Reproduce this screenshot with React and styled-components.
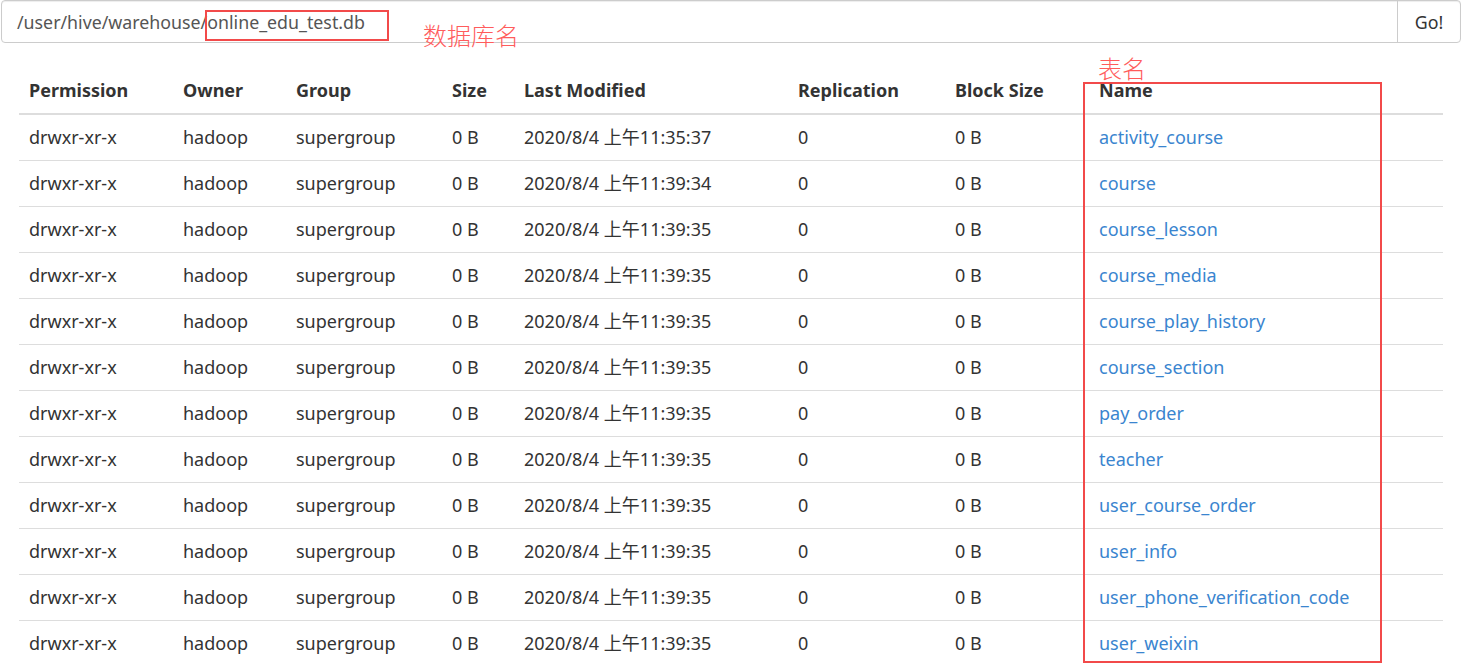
import React from 'react';
import styled, { createGlobalStyle } from 'styled-components';

const GlobalStyle = createGlobalStyle`
  html, body {
    margin: 0;
    padding: 0;
    background: #fff;
  }
  body {
    font-family: "Noto Sans", "Noto Sans CJK SC", sans-serif;
    font-size: 18px;
    color: #333;
  }
`;

const Page = styled.div`
  position: relative;
  width: 1462px;
  height: 664px;
  overflow: hidden;
`;

const InputGroup = styled.div`
  display: flex;
  height: 43px;
  margin: 0 1px;
  border: 1px solid #ccc;
  border-radius: 4px;
  box-sizing: border-box;
  box-shadow: inset 0 1px 1px rgba(0, 0, 0, 0.075);
`;

const PathInput = styled.div`
  flex: 1;
  display: flex;
  align-items: center;
  padding: 0 15px;
  font-size: 17.8px;
  color: #555;
`;

const Highlight = styled.span`
  position: relative;
  &::after {
    content: '';
    position: absolute;
    left: -2px;
    top: 50%;
    margin-top: -12px;
    width: 184px;
    height: 31px;
    border: 2px solid #f24a4a;
    box-sizing: border-box;
  }
`;

const GoButton = styled.div`
  width: 62px;
  display: flex;
  align-items: center;
  justify-content: center;
  border-left: 1px solid #ccc;
  font-size: 17.8px;
  color: #333;
`;

const Note = styled.div`
  position: absolute;
  left: ${p => p.$x}px;
  top: ${p => p.$y}px;
  color: #ff5c5c;
  font-family: "Noto Sans CJK SC", sans-serif;
  font-weight: 300;
  font-size: 24px;
  line-height: 1;
`;

const NameBox = styled.div`
  position: absolute;
  left: 1083px;
  top: 82px;
  width: 299px;
  height: 581px;
  border: 2px solid #f24a4a;
  box-sizing: border-box;
  pointer-events: none;
`;

const Table = styled.table`
  margin: 24px 19px 0 19px;
  width: 1424px;
  border-collapse: collapse;
  border-spacing: 0;
  table-layout: fixed;
`;

const Th = styled.th`
  text-align: left;
  font-weight: 700;
  padding: 10px 10px;
  line-height: 25px;
  height: 47px;
  box-sizing: border-box;
  border-bottom: 2px solid #ddd;
  width: ${p => p.$w}px;
`;

const Td = styled.td`
  padding: 10px 10px;
  line-height: 25px;
  height: 46px;
  box-sizing: border-box;
  border-top: 1px solid #ddd;
  white-space: nowrap;
`;

const Link = styled.a`
  color: #3a85cf;
  text-decoration: none;
`;

const columns = [
  ['Permission', 154],
  ['Owner', 113],
  ['Group', 156],
  ['Size', 72],
  ['Last Modified', 274],
  ['Replication', 157],
  ['Block Size', 144],
  ['Name', 354],
];

const tables = [
  ['activity_course', '11:35:37'],
  ['course', '11:39:34'],
  ['course_lesson', '11:39:35'],
  ['course_media', '11:39:35'],
  ['course_play_history', '11:39:35'],
  ['course_section', '11:39:35'],
  ['pay_order', '11:39:35'],
  ['teacher', '11:39:35'],
  ['user_course_order', '11:39:35'],
  ['user_info', '11:39:35'],
  ['user_phone_verification_code', '11:39:35'],
  ['user_weixin', '11:39:35'],
];

export default function App() {
  return (
    <Page>
      <GlobalStyle />
      <InputGroup>
        <PathInput>
          /user/hive/warehouse/<Highlight>online_edu_test.db</Highlight>
        </PathInput>
        <GoButton>Go!</GoButton>
      </InputGroup>
      <Note $x={423} $y={23}>数据库名</Note>
      <Note $x={1098} $y={56}>表名</Note>
      <Table>
        <thead>
          <tr>
            {columns.map(([label, w]) => (
              <Th key={label} $w={w}>{label}</Th>
            ))}
          </tr>
        </thead>
        <tbody>
          {tables.map(([name, time]) => (
            <tr key={name}>
              <Td>drwxr-xr-x</Td>
              <Td>hadoop</Td>
              <Td>supergroup</Td>
              <Td>0 B</Td>
              <Td>2020/8/4 上午{time}</Td>
              <Td>0</Td>
              <Td>0 B</Td>
              <Td><Link href="#">{name}</Link></Td>
            </tr>
          ))}
        </tbody>
      </Table>
      <NameBox />
    </Page>
  );
}
